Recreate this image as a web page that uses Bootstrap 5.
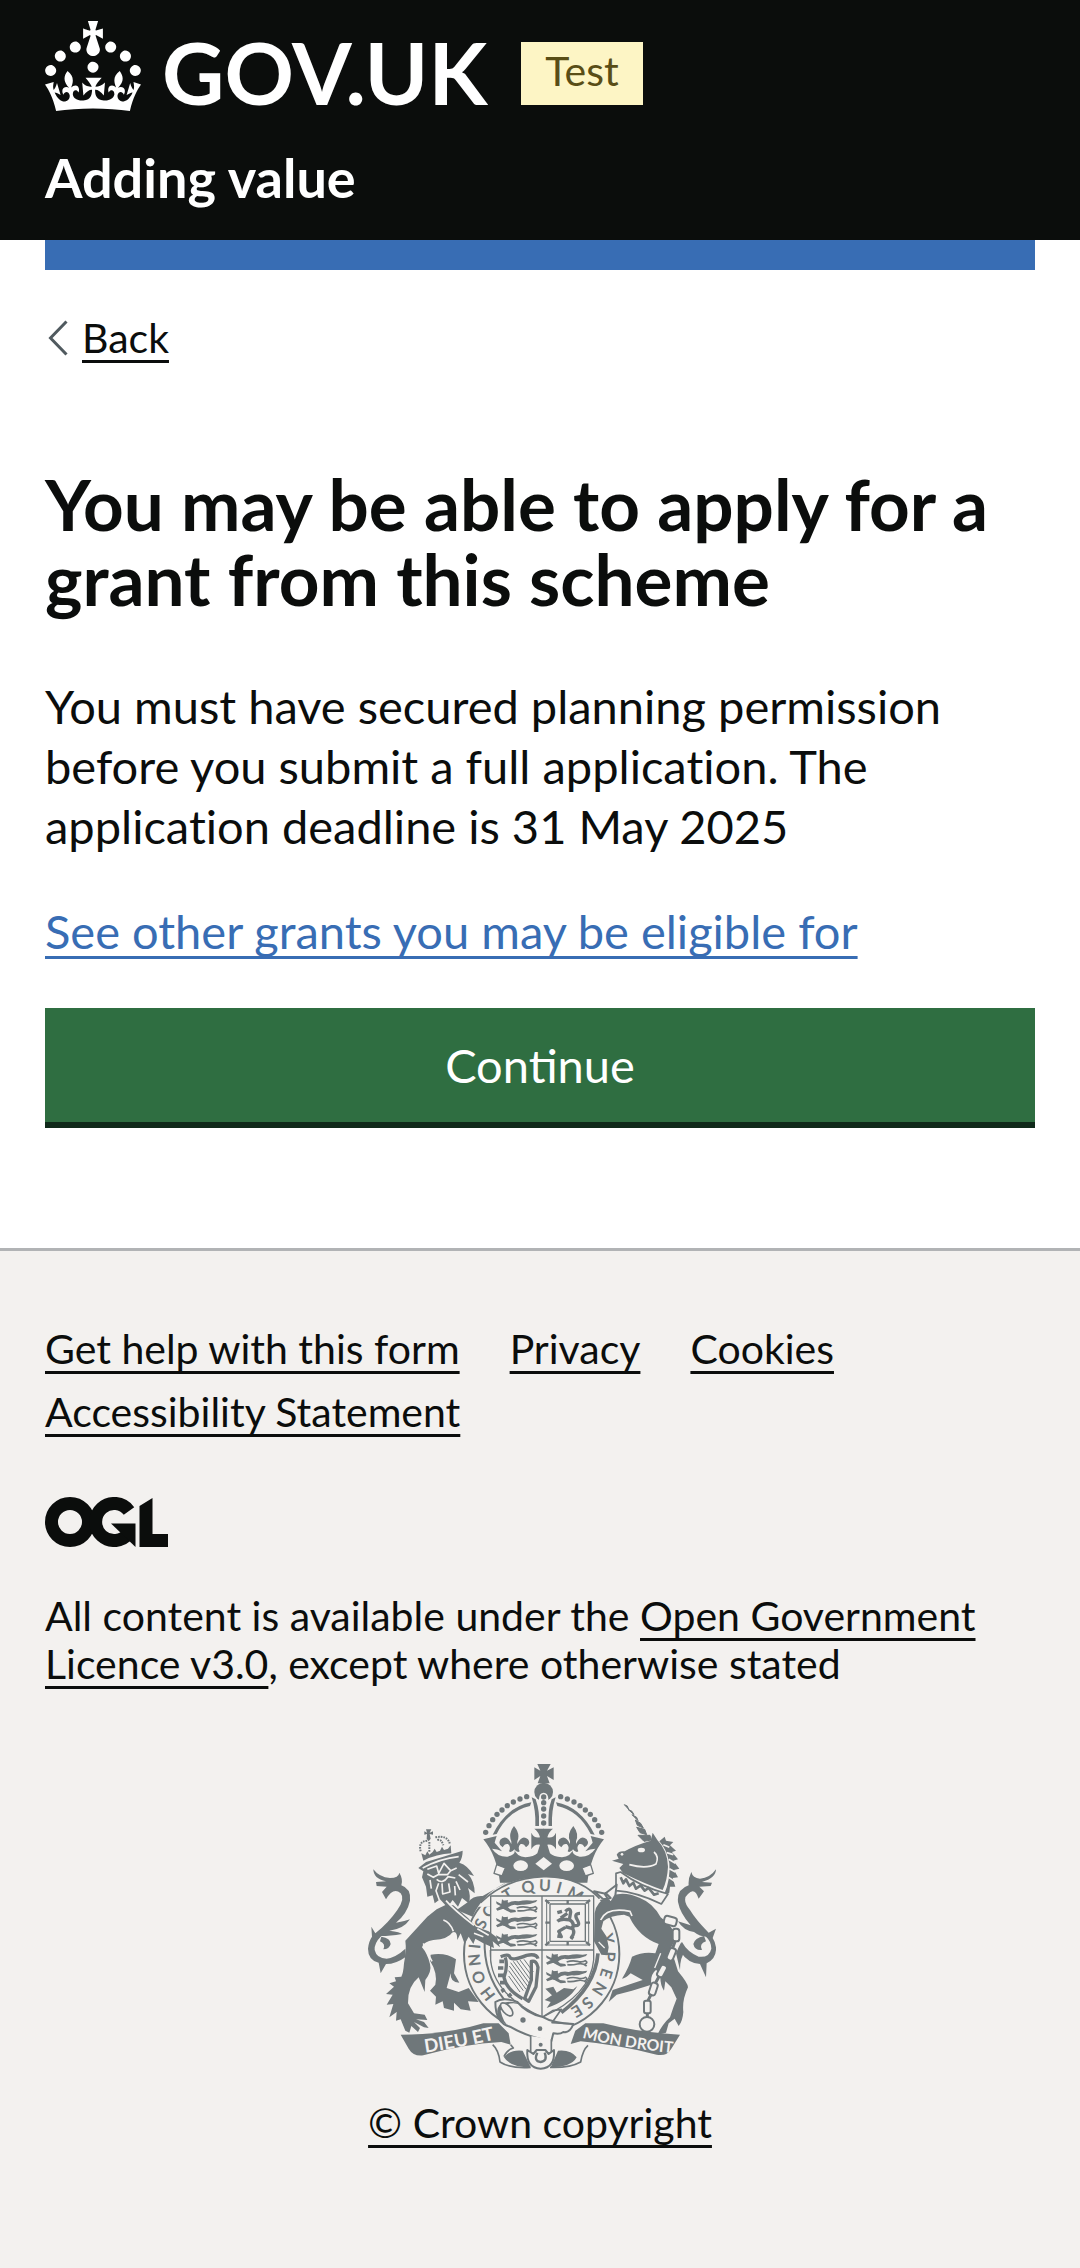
<!DOCTYPE html>
<html lang="en">
<head>
<meta charset="utf-8">
<meta name="viewport" content="width=device-width, initial-scale=1">
<title>You may be able to apply for a grant from this scheme - Adding value</title>
<link href="https://cdn.jsdelivr.net/npm/bootstrap@5.3.0/dist/css/bootstrap.min.css" rel="stylesheet">
<style>
:root{--ink:#0b0d0c;--blue:#386db4;--green:#2f6e41;--paper:#f3f1ef}
body{font-family:Lato,"Noto Sans",sans-serif;font-variant-ligatures:none;color:var(--ink);font-size:47px;line-height:60px;background:var(--paper)}
.page-gutter{padding-left:45px;padding-right:45px}
.small-copy{font-size:41px;line-height:48px}
.site-head{background:var(--ink);padding-top:21px;padding-bottom:32px}
.logo-word{font-size:86px;line-height:102px;font-weight:700;margin-left:21px}
.phase-tag{background:#fdf5c5;color:#594d16;font-size:41px;line-height:57px;padding:0 24px 6px;margin:21px 0 0 34px}
.service-name{font-size:54px;line-height:60px;margin-top:25px}
.blue-bar{height:30px;background:var(--blue)}
a.ruled{color:var(--ink);text-decoration:underline;text-decoration-thickness:3px;text-underline-offset:7px;text-decoration-skip-ink:none}
a.ruled.blue{color:var(--blue)}
.back-link{margin-top:44px}
.back-link svg{width:21px;height:36px;margin-left:3px;margin-right:13px}
h1.page-title{font-size:71px;line-height:75px;font-weight:700;margin:104px 0 60px}
.copy{margin-bottom:45px}
.main-area{padding-bottom:120px}
.btn-go{--bs-btn-color:#fff;--bs-btn-bg:var(--green);--bs-btn-hover-color:#fff;--bs-btn-hover-bg:#285e37;--bs-btn-active-bg:#285e37;font-size:47px;line-height:60px;padding:27px 30px;border:0;border-radius:0;box-shadow:0 6px 0 #10291a;margin-top:47px;margin-bottom:6px}
.site-foot{border-top:3px solid #b1b3b5;padding-top:74px;padding-bottom:121px}
.foot-links{gap:15px 50px}
.ogl{width:123px;height:50px;margin:61px 0 45px}
.crest-wrap{margin-top:76px}
.crest-link svg{width:348px;height:306px;margin:0 0 29px 3px}
</style>
</head>
<body>
<header class="site-head page-gutter text-white">
  <div class="d-flex align-items-start">
    <a href="#" class="d-flex align-items-start text-white text-decoration-none">
      <svg width="96" height="90" viewBox="0 0 32 30" fill="currentColor" aria-hidden="true"><path d="M22.6 10.4c-1 .4-2-.1-2.4-1-.4-.9.1-2 1-2.4.9-.4 2 .1 2.4 1s-.1 2-1 2.4m-5.9 6.7c-.9.4-2-.1-2.4-1-.4-.9.1-2 1-2.4.9-.4 2 .1 2.4 1s-.1 2-1 2.4m10.8-3.7c-1 .4-2-.1-2.4-1-.4-.9.1-2 1-2.4.9-.4 2 .1 2.4 1s0 2-1 2.4m3.3 4.8c-1 .4-2-.1-2.4-1-.4-.9.1-2 1-2.4.9-.4 2 .1 2.4 1s-.1 2-1 2.4M17 4.700l2.300 1.200V2.500l-2.300.7-.2-.2.9-3h-3.400l.9 3-.2.2c-.1.1-2.300-.7-2.300-.7v3.400L15 4.700c.1.1.1.2.2.2l-1.300 4c-.1.2-.1.4-.1.6 0 1.100.8 2 1.900 2.200h.7c1-.2 1.900-1.100 1.900-2.100 0-.2 0-.4-.1-.6l-1.300-4c-.1-.2 0-.2.1-.3m-7.600 5.700c.9.4 2-.1 2.400-1 .4-.9-.1-2-1-2.400-.9-.4-2 .1-2.400 1s0 2 1 2.400m-5 3c.9.4 2-.1 2.400-1 .4-.9-.1-2-1-2.400-.9-.4-2 .1-2.400 1s.1 2 1 2.400m-3.200 4.800c.9.4 2-.1 2.400-1 .4-.9-.1-2-1-2.400-.9-.4-2 .1-2.400 1s0 2 1 2.400m14.800 11c4.400 0 8.600.3 12.300.8 1.100-4.500 2.400-7 3.700-8.800l-2.500-.9c.2 1.300.3 1.900 0 2.700-.4-.4-.8-1.100-1.100-2.300l-1.200 4c.7-.5 1.300-.8 2-.9-1.100 2.500-2.600 3.100-3.500 3-1.100-.2-1.700-1.200-1.500-2.100.3-1.200 1.500-1.500 2.100-.1 1.100-2.300-.8-3-2-2.300 1.900-1.900 2.100-3.500.6-5.600-2.100 1.600-2.100 3.200-1.200 5.500-1.200-1.400-3.200-.6-2.500 1.600.9-1.400 2.100-.5 1.900.8-.2 1.100-1.700 2.100-3.500 1.900-2.700-.2-2.900-2.100-2.900-3.600.7-.1 1.900.5 2.900 1.900l.4-4.300c-1.100 1.100-2.100 1.400-3.200 1.400.4-1.200 2.100-3 2.100-3h-5.400s1.700 1.900 2.100 3c-1.100 0-2.100-.2-3.200-1.400l.4 4.300c1-1.400 2.200-2 2.900-1.900-.1 1.500-.2 3.400-2.900 3.600-1.900.2-3.400-.8-3.500-1.900-.2-1.300 1-2.200 1.900-.8.7-2.300-1.200-3-2.500-1.600.9-2.200.9-3.900-1.200-5.500-1.500 2-1.300 3.700.6 5.600-1.200-.7-3.100 0-2 2.300.6-1.400 1.800-1.100 2.100.1.2.9-.3 1.900-1.500 2.100-.9.2-2.400-.5-3.500-3 .6 0 1.200.3 2 .9l-1.200-4c-.3 1.100-.7 1.900-1.100 2.300-.3-.8-.2-1.400 0-2.700l-2.900.9C1.300 23 2.600 25.500 3.700 30c3.700-.5 7.900-.8 12.300-.8"/></svg>
      <span class="logo-word">GOV.UK</span>
    </a>
    <strong class="phase-tag fw-normal">Test</strong>
  </div>
  <a href="#" class="service-name d-block fw-bold text-white text-decoration-none">Adding value</a>
</header>

<div class="page-gutter bg-white main-area">
  <div class="blue-bar"></div>
  <div class="back-link small-copy d-flex align-items-center">
    <svg viewBox="0 0 21 36" fill="none" stroke="#505a5f" stroke-width="3" aria-hidden="true"><path d="M18.500 1.500 2.500 18l16 16.500"/></svg>
    <a href="#" class="ruled">Back</a>
  </div>
  <main>
    <h1 class="page-title">You may be able to apply for a grant from this scheme</h1>
    <p class="copy">You must have secured planning permission before you submit a full application. The application deadline is 31 May 2025</p>
    <a href="#" class="ruled blue d-block">See other grants you may be eligible for</a>
    <button type="button" class="btn btn-go w-100 d-block">Continue</button>
  </main>
</div>

<footer class="site-foot page-gutter small-copy">
  <ul class="foot-links list-unstyled d-flex flex-wrap mb-0">
    <li><a href="#" class="ruled">Get help with this form</a></li>
    <li><a href="#" class="ruled">Privacy</a></li>
    <li><a href="#" class="ruled">Cookies</a></li>
    <li><a href="#" class="ruled">Accessibility Statement</a></li>
  </ul>
  <svg class="ogl d-block" viewBox="0 0 123 50" fill="none" stroke="#0b0d0c" stroke-width="13" role="img" aria-label="Open Government Licence">
    <circle cx="25" cy="25" r="18.500"/>
    <path d="M84 14A18.500 18.500 0 1 0 84 36"/>
    <path d="M70 26.500H90.500V50L66 26.500Z" fill="#0b0d0c" stroke="none"/>
    <path d="M94.500 9 107.500 1V37H123V50H94.500Z" fill="#0b0d0c" stroke="none"/>
  </svg>
  <p class="mb-0">All content is available under the <a href="#" class="ruled">Open Government Licence v3.0</a>, except where otherwise stated</p>
  <div class="crest-wrap text-center">
    <a href="#" class="crest-link ruled d-inline-flex flex-column align-items-center">
      <svg viewBox="84 72 1044 918" fill="#6f777a" stroke="none" stroke-linejoin="round" aria-hidden="true">
        <defs>
          <g id="passant"><ellipse cx="29" cy="17" rx="10" ry="13"/><path d="M18 14 2 6 4 14 16 20 2 28 6 34 24 28 34 34 46 40 62 38 60 32 44 30 38 24Q54 12 66 18L80 16Q98 18 122 8L126 2 112 4Q90 0 70 6 50 2 36 12L38 2 26 4 20 0Z"/><path d="M64 26Q80 20 96 24T120 22Q130 28 118 32M66 34Q80 36 96 32T124 38" fill="none" stroke="#6f777a" stroke-width="5"/></g>
          <g id="crownhalf">
            <g><circle cx="560" cy="170" r="8"/><circle cx="540" cy="177" r="8"/><circle cx="520" cy="186" r="8"/><circle cx="502" cy="197" r="8"/><circle cx="486" cy="210" r="8"/><circle cx="471" cy="223" r="8"/><circle cx="458" cy="239" r="8"/><circle cx="447" cy="257" r="8"/><circle cx="437" cy="277" r="8"/></g>
            <path d="M458 284Q500 200 574 187L570 198Q505 212 470 282Z"/>
            <path d="M575 172 587 178Q600 215 597 258H586Q588 212 575 172Z"/>
            <path d="M430 298 470 288Q466 300 464 308L486 334Q472 326 456 326 474 352 503 350 528 345 524 327 514 340 507 334 514 320 504 312 494 310 488 322 472 312 482 298 500 282 514 312L514 304Q504 282 522 258 542 282 532 304L532 312Q546 282 564 298 574 312 558 322 552 310 542 312 532 320 539 334 532 340 522 327 530 350 556 352 582 350 592 340L600 314Q582 312 574 328V278Q582 296 600 292 596 276 583 266H612V428H480Q470 345 430 298Z"/>
          </g>
          <path id="garter" d="M605 825A186 186 0 1 1 606 825"/>
          <path id="scrollL" d="M256 938Q370 922 490 892"/>
          <path id="scrollR" d="M726 893Q850 925 1010 940"/>
        </defs>

        <!-- garter -->
        <circle cx="605" cy="642" r="233" fill="#f3f1ef" stroke="#6f777a" stroke-width="6"/>
        <path d="M434 600Q430 700 492 778M452 630Q450 700 502 760" fill="none" stroke="#6f777a" stroke-width="6"/>
        <path d="M774 640Q766 740 664 818" fill="none" stroke="#6f777a" stroke-width="11"/>
        <text font-family="Lato, sans-serif" font-size="48" font-weight="700" text-anchor="middle" x="171 223 272 310 375 418 836 885 932 979 1029 1066"><textPath href="#garter">HONISOYPENSE</textPath></text>

        <!-- crown -->
        <use href="#crownhalf"/><use href="#crownhalf" transform="matrix(-1 0 0 1 1222 0)"/>
        <path d="M400 500Q490 410 611 410T815 500Z" fill="#f3f1ef"/>
        <path d="M422 488Q500 413 611 410T790 488" fill="none" stroke="#6f777a" stroke-width="5"/>
        <path d="M592 72h40l-11 20 20-10v38l-20-12 8 22h-36l8-22-18 12V82l18 10Z"/>
        <circle cx="611" cy="156" r="28"/>
        <path d="M597 262V176Q598 158 611 158T625 176V262Z" fill="#f3f1ef"/>
        <circle cx="611" cy="171" r="8"/><circle cx="611" cy="188" r="8"/><circle cx="611" cy="207" r="8"/><circle cx="611" cy="228" r="8"/><circle cx="611" cy="249" r="8"/>
        <g fill="#f3f1ef"><ellipse cx="542" cy="377" rx="22" ry="16"/><ellipse cx="680" cy="377" rx="22" ry="16"/><path d="M611 351 636 371 611 391 586 371Z"/><g stroke="#6f777a" stroke-width="4"><path d="M470 374 496 384 486 408 462 400ZM752 374 726 384 736 408 760 400Z"/></g></g>
        <text font-family="Lato, sans-serif" font-size="48" font-weight="700" text-anchor="middle" x="486 545 592 632 680"><textPath href="#garter">TQUIM</textPath></text>

        <!-- shield -->
        <path d="M452 468H761V660Q752 765 606 832 462 765 452 660Z" fill="#f3f1ef" stroke="#6f777a" stroke-width="4"/>
        <path d="M606 468V832M452 630H761" fill="none" stroke="#6f777a" stroke-width="4"/>
        <use href="#passant" x="466" y="478"/><use href="#passant" x="466" y="528"/><use href="#passant" x="466" y="580"/>
        <use href="#passant" x="616" y="640"/><use href="#passant" x="616" y="690"/>
        <path d="M616 746 640 740 650 758 672 744 700 748 712 738Q690 780 620 804L632 786 614 780 636 766Z"/>
        <g fill="none" stroke="#6f777a">
          <rect x="620" y="482" width="126" height="133" stroke-width="3"/><rect x="630" y="492" width="106" height="112" stroke-width="4"/>
          <path d="M683 480v12M683 604v12M616 548h14M736 548h14M616 480l12 10M750 480l-12 10M616 616l12-10M750 616l-12-10" stroke-width="7"/>
          <path d="M676 514Q690 500 692 516L688 540Q664 534 652 544M690 540Q704 548 698 566L676 560M698 566Q706 580 694 592L700 596M676 562 656 574 664 590 652 588M700 556Q724 560 712 540T720 520M666 514 652 518M682 520 662 534" stroke-width="10"/>
          <path d="M482 650Q506 640 510 652T560 646Q590 640 594 656M496 652Q504 680 492 712 500 750 548 776M574 664Q590 660 594 682L588 740 566 784 554 776 574 720Z" stroke-width="10"/>
          <path d="M478 664h14M474 684h16M474 706h18M480 728h18M494 748l-10 6M514 762l-10 8" stroke-width="11"/>
          <path d="M512 668 564 740M520 664 568 730M530 662 572 720M540 660 576 708M552 658 580 696M508 678 558 748M506 692 550 752M506 708 540 756" stroke-width="3"/>
        </g>

        <!-- lion supporter -->
        <path d="M384 486Q400 466 428 468L506 424Q430 458 398 530L350 510Z"/>
        <path d="M100 388Q118 412 150 414 176 414 178 398 190 418 184 436 214 446 210 482 202 520 168 548 188 546 210 538 190 568 148 572 182 576 186 582 150 588 124 588 102 610 104 630 110 656 140 656 168 652 196 626L198 650Q168 672 138 672L122 700 116 668Q84 660 84 626 86 604 96 590L94 560 106 580Q146 548 172 510 196 476 182 460 160 440 138 478L126 456 140 440 110 438 108 426 138 424Q100 416 100 388Z"/>
        <path d="M124 590Q152 594 152 612 148 628 130 628 138 612 120 604Z"/>
        <path d="M318 494 290 508 262 530 196 602Q200 630 192 670 190 700 184 710L164 712 168 724 148 730 162 740 138 762 158 764 140 794 160 792 148 832 170 816 168 842 182 838 196 872 208 878 214 858 234 876 240 864 222 846 252 862 266 864 252 846 228 838 262 840 254 824 222 820 204 790Q202 740 236 712L254 756 256 720Q276 694 270 672 262 640 246 622 252 604 280 600 326 596 336 578 352 570 352 600L362 580 374 612 386 590 400 612 406 596 430 610 462 624 458 604 480 622 470 592 446 574 408 560 384 534 340 496Z"/>
        <path d="M272 644Q316 636 348 658L342 700 358 728Q330 728 332 700L320 744 356 756 386 744 416 786 384 784 392 812 362 808 342 788 342 812 312 804 308 784 286 794 288 770 270 752 286 734Q294 700 270 662Z"/>
        <path d="M235 384 258 366Q310 350 368 332 368 354 358 368 384 376 402 408L384 402Q404 424 404 460L384 444Q394 470 386 490L366 474 354 500 338 480 322 502 300 478 284 490 278 466 262 470 258 440 246 412 250 394Z"/>
        <g fill="none" stroke="#f3f1ef" stroke-width="5"><path d="M248 384Q300 356 356 350M262 388 290 378 296 400 312 370 332 392 322 404 294 404 280 412 262 402M332 392 350 384M290 418Q308 434 324 410L346 414M306 430 308 462 330 456 326 430M296 430 288 452 298 480M348 424 360 450M356 404 384 426M344 438 346 466M270 420 274 446M318 482Q342 510 402 556M310 540Q330 546 340 574M250 610Q262 640 276 664M402 580 430 590M412 566 446 586"/></g>
        <path d="M258 268h16l-5 10 10-4v10l-10-2 3 14-6 8-6-8 1-14-8 2v-10l8 4Z"/>
        <path d="M244 340 256 346 262 334 268 344 278 336 284 326 290 336 300 332 306 320 312 330 324 326 332 316 334 340Q290 342 250 362Z"/>
        <path d="M242 334Q234 304 262 302M268 306V338M286 292Q324 284 330 314M292 300Q304 296 310 316" fill="none" stroke="#6f777a" stroke-width="6" stroke-dasharray="5 3"/>

        <!-- unicorn supporter -->
        <path d="M853 194 862 198 866 208ZM864 208 876 214 882 224ZM876 224 890 232 894 242ZM886 240 902 250 910 264 892 256ZM890 262 914 268 920 284 900 278ZM894 286 930 286 934 300 912 304Z" stroke="#6f777a" stroke-width="3"/>
        <path d="M816 362 836 356 830 344Q836 332 854 334 884 316 932 302L938 278 952 300Q982 330 984 380 982 420 968 450 920 434 850 400L838 384 850 372Z"/>
        <path d="M958 304 974 290 978 302 1000 306 990 316 1008 332 996 336 1014 358 1000 362 1018 386 1002 390 1014 412 998 414 1006 440 990 440 988 458 972 464Q992 420 988 370 980 326 958 304Z"/>
        <g fill="none" stroke="#f3f1ef" stroke-width="5"><path d="M868 374Q920 388 948 372 958 350 942 336M970 314 988 322M980 338 1000 344M986 358 1006 370M988 386 1006 396M986 412 1004 424"/></g><ellipse cx="904" cy="330" rx="11" ry="7" fill="#f3f1ef"/><circle cx="846" cy="343" r="4" fill="#f3f1ef"/>
        <path d="M828 400 842 396Q900 440 984 462L964 492Q890 456 828 452Z" fill="#f3f1ef" stroke="#6f777a" stroke-width="5"/>
        <path d="M842 412 850 430 858 418 868 438 880 428 888 446 902 436 914 452 926 444 942 464 956 460" fill="none" stroke="#6f777a" stroke-width="8"/>
        <path d="M764 520Q768 484 806 470 850 450 900 474 940 490 962 532 1000 560 1006 590 1000 612 990 630 1006 660 1014 694 1044 730 1044 742 1026 780 1030 816 1028 844 1016 858L1004 836 986 850 978 878 952 884Q968 852 990 832 1000 800 1010 776L994 742 976 724 972 752Q958 730 962 700L948 690Q930 704 934 734L876 752 830 764 806 786 818 750 890 726 908 720 872 700Q856 716 846 716 868 680 876 650 910 634 946 640L956 612Q896 590 868 530L852 524Q810 526 790 544L784 566 800 590 806 622 802 646 784 644 762 604Z"/>
        <path d="M1008 640Q1016 620 1024 606L1036 636Q1020 650 1020 690Z"/>
        <path d="M782 540Q800 500 870 514L876 528" fill="none" stroke="#f3f1ef" stroke-width="5"/><path d="M776 606 794 624M962 640 944 684M806 468Q780 470 770 490" fill="none" stroke="#f3f1ef" stroke-width="4"/>
        <path d="M794 462 830 434 826 466 812 490ZM762 454 800 462 812 474 790 478Z" fill="#f3f1ef" stroke="#6f777a" stroke-width="6"/>
        <path d="M1128 388Q1110 414 1080 416 1058 414 1054 396 1044 416 1046 436 1010 448 1014 486 1020 520 1052 556L1014 544Q1030 572 1062 576 1080 590 1098 590 1114 604 1114 626 1108 654 1076 650 1042 636 1026 606L1020 634Q1046 672 1080 672L1098 712 1100 670Q1130 656 1128 622 1126 606 1118 594L1128 566 1106 578Q1068 540 1050 510 1024 478 1044 462 1064 440 1076 476L1092 454 1078 440 1112 438 1116 428 1086 426Q1128 414 1128 388Z"/>
        <path d="M1092 588Q1064 594 1060 612 1064 632 1086 630 1076 612 1098 604Z"/>
        <g fill="#f3f1ef" stroke="#6f777a" stroke-width="6"><rect x="972" y="530" width="38" height="26" rx="9" transform="rotate(15 991 543)"/><rect x="998" y="566" width="20" height="38" rx="8"/><rect x="984" y="624" width="20" height="38" rx="8" transform="rotate(22 994 643)"/><rect x="956" y="674" width="20" height="38" rx="8" transform="rotate(28 966 693)"/><rect x="930" y="728" width="20" height="38" rx="8" transform="rotate(18 940 747)"/><rect x="912" y="782" width="20" height="38" rx="6"/><circle cx="921" cy="853" r="22"/></g>
        <path d="M1006 602 998 624M986 658 974 676M958 708 946 730M932 766 924 782M922 820V832" fill="none" stroke="#6f777a" stroke-width="9"/>

        <!-- ribbons -->
        <path d="M182 884Q320 884 430 850L476 850 506 880 512 914 484 906Q370 912 250 946 220 950 206 926Z"/>
        <path d="M1020 884Q900 878 790 850L736 850 706 872 692 912 722 904Q830 914 950 944 980 950 994 926Z"/>
        <g font-family="Lato, sans-serif" font-weight="700" fill="#f3f1ef"><text font-size="56"><textPath href="#scrollL">DIEU ET</textPath></text><text font-size="47"><textPath href="#scrollR">MON DROIT</textPath></text></g>
        <path d="M458 914Q476 930 480 966 510 986 572 982M744 916Q728 930 722 966 690 984 630 982M512 914 520 924Q500 930 492 950" fill="none" stroke="#6f777a" stroke-width="5"/>
        <path d="M492 952Q510 928 548 932L572 982Q510 982 492 952ZM710 952Q692 928 654 932L632 982Q694 982 710 952Z"/>

        <!-- belt and buckle -->
        <path d="M466 786Q490 770 532 786 560 820 606 830 640 850 700 852 690 880 670 876 660 884 640 880L634 904Q560 890 510 860 466 850 466 786Z" fill="#f3f1ef" stroke="#6f777a" stroke-width="6"/>
        <path d="M606 832 638 812 664 808 636 848 700 852" fill="none" stroke="#6f777a" stroke-width="5"/>
        <path d="M478 796Q506 776 550 794L520 790Q484 792 482 812 490 850 508 858L480 842Q464 812 478 796Z"/>
        <ellipse cx="500" cy="808" rx="12" ry="24" fill="#f3f1ef" stroke="#6f777a" stroke-width="5" transform="rotate(-42 500 808)"/>
        <circle cx="549" cy="840" r="8"/><circle cx="600" cy="866" r="7"/>
        <path d="M572 888V940H634V898" fill="#f3f1ef" stroke="#6f777a" stroke-width="5"/><circle cx="602" cy="914" r="6"/>
        <path d="M562 930 580 942 590 930H616L626 942 642 930Q646 984 602 986 558 984 562 930Z" fill="#f3f1ef" stroke="#6f777a" stroke-width="6"/>
        <path d="M592 938Q580 964 602 966 624 964 614 938" fill="none" stroke="#6f777a" stroke-width="7"/>
      </svg>
      <span>© Crown copyright</span>
    </a>
  </div>
</footer>
<script src="https://cdn.jsdelivr.net/npm/bootstrap@5.3.0/dist/js/bootstrap.bundle.min.js"></script>
</body>
</html>
